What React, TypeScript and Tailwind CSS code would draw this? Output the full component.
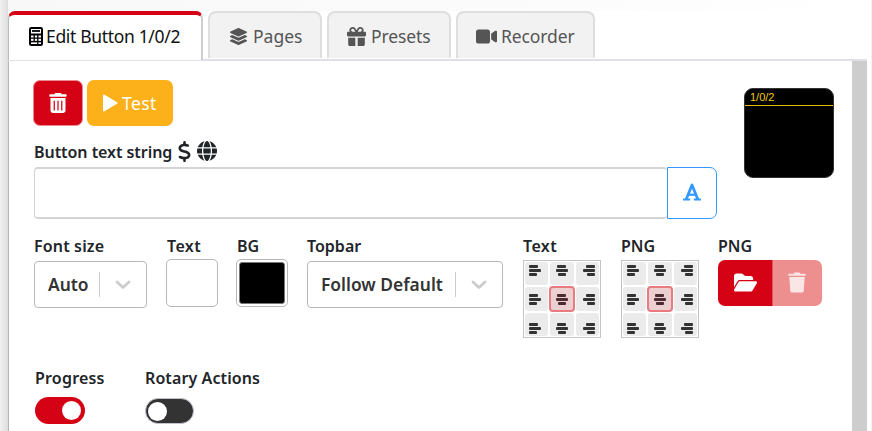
import type { ReactNode } from 'react'
import {
  FaDollarSign,
  FaFolderOpen,
  FaGift,
  FaGlobe,
  FaLayerGroup,
  FaTrashCan,
  FaVideo,
} from 'react-icons/fa6'

function CalculatorIcon() {
  return (
    <svg width="14" height="19" viewBox="0 0 14 19" fill="none" stroke="#000">
      <rect x="1" y="1" width="12" height="17" rx="1.2" strokeWidth="2" />
      <path d="M1 7.5H13" strokeWidth="2" />
      <path d="M3 4H11" strokeWidth="1.8" />
      <path d="M2 11.2H12M5.2 7V15M8.8 7V18" strokeWidth="1.3" />
      <path d="M2 14.6H12" strokeWidth="1.5" />
    </svg>
  )
}

function Tab({ className, children }: { className: string; children: ReactNode }) {
  return (
    <div
      className={`flex h-[47px] items-center gap-[5px] rounded-t-[8px] border-2 border-b-0 border-[#dededf] bg-[#f2f2f2] pt-[2px] text-[17.5px] text-[#555] ${className}`}
    >
      {children}
    </div>
  )
}

function Label({ children, className = '' }: { children: ReactNode; className?: string }) {
  return (
    <div className={`h-[24px] text-[16px] leading-[24px] font-semibold whitespace-nowrap text-[#212529] ${className}`}>
      {children}
    </div>
  )
}

function Select({ value, className }: { value: string; className: string }) {
  return (
    <div className={`flex h-[47px] items-center rounded-[4px] border border-[#b8b8b8] ${className}`}>
      <span className="flex-1 pl-[13px] text-[17.4px] font-semibold whitespace-nowrap text-[#333]">{value}</span>
      <span className="h-[25px] w-px bg-[#ccc]" />
      <span className="flex w-[46px] justify-center pr-px">
        <svg width="16" height="10" viewBox="0 0 16 10" fill="none" stroke="#ccc" strokeWidth="2.8" strokeLinecap="round" strokeLinejoin="round">
          <path d="M2 2L8 7.5L14 2" />
        </svg>
      </span>
    </div>
  )
}

const columns = ['items-start pl-[4px]', 'items-center', 'items-end pr-[4px]']
const rows = ['pt-[3px]', 'pt-[7px]', 'pt-[10px]']

function AlignGrid() {
  return (
    <div className="grid h-[78px] w-[78px] grid-cols-3 grid-rows-3 gap-[2px] border border-[#c4c4c4] bg-white p-[1px]">
      {rows.map((row, r) =>
        columns.map((column, c) => {
          const selected = r === 1 && c === 1
          return (
            <div
              key={`${r}-${c}`}
              className={`flex flex-col gap-[1px] rounded-[3px] ${row} ${column} ${
                selected ? 'bg-[#ecd0d1] outline-2 -outline-offset-1 outline-[#e77b80]' : 'bg-[#ebebeb]'
              }`}
            >
              {[9, 12, 8].map((w, i) => (
                <span
                  key={i}
                  style={{ width: w }}
                  className={`h-[3px] shrink-0 rounded-[1px] ${selected ? 'bg-[#4b2c30]' : 'bg-[#333]'}`}
                />
              ))}
            </div>
          )
        }),
      )}
    </div>
  )
}

export default function App() {
  return (
    <div className="flex h-[431px] w-[872px] overflow-hidden bg-white font-['Noto_Sans',sans-serif]">
      <div className="w-[8px] shrink-0 bg-linear-to-r from-[#f1f1f1] to-[#dedede]" />
      <div className="flex w-[859px] shrink-0 flex-col">
        <div className="h-[11px] shrink-0 bg-linear-to-r from-[#f8f8f8] via-[#fbfbfb] to-white" />
        <div className="flex h-[50px] shrink-0 items-start border-b-2 border-[#e0e0e6]">
          <div className="flex h-[49px] w-[195px] shrink-0 items-center gap-[4px] rounded-t-[7px] border-t-4 border-r-2 border-l border-t-[#d50215] border-r-[#cfcfcf] border-l-[#bbb] bg-white pb-[2px] pl-[20px] text-[17.5px] tracking-[-0.33px] whitespace-nowrap text-[#111]">
            <CalculatorIcon />
            <span className="-ml-px">Edit Button 1/0/2</span>
          </div>
          <Tab className="ml-[5px] w-[114px] pl-[19px]">
            <FaLayerGroup size={19} />
            <span>Pages</span>
          </Tab>
          <Tab className="ml-[5px] w-[124px] pl-[18px]">
            <FaGift size={19} />
            <span className="tracking-[-0.1px]">Presets</span>
          </Tab>
          <Tab className="ml-[5px] w-[139px] pl-[18px]">
            <FaVideo size={21} />
            <span className="-ml-px tracking-[-0.1px]">Recorder</span>
          </Tab>
        </div>
        <div className="flex min-h-0 flex-1 border-l border-[#b5b5b5]">
          <div className="flex w-[843px] shrink-0 flex-col pl-[25px]">
            <div className="flex h-[158px]">
              <div className="w-[683px] pt-[19px]">
                <div className="flex gap-[4px] text-white">
                  <button className="-ml-px flex h-[46px] w-[50px] items-center justify-center rounded-[7px] border border-[#ec8990] bg-[#d50215] pb-px">
                    <FaTrashCan size={20} />
                  </button>
                  <button className="flex h-[46px] w-[86px] items-center rounded-[7px] bg-[#fcb01a] pl-[15px] text-[17.5px] tracking-[0.4px]">
                    <svg width="16" height="18" viewBox="0 0 16 18" className="mr-[4px]">
                      <path d="M2 1.5L14.5 9L2 16.5Z" fill="white" stroke="white" strokeWidth="2" strokeLinejoin="round" />
                    </svg>
                    Test
                  </button>
                </div>
                <div className="mt-[14px] flex items-center">
                  <Label className="tracking-[-0.05px]">Button text string</Label>
                  <FaDollarSign size={21} className="-mt-[2px] ml-[2px] text-[#212529]" />
                  <FaGlobe size={20} className="-mt-[3px] ml-[2px] text-[#212529]" />
                </div>
                <div className="mt-[3px] flex h-[52px]">
                  <div className="w-[634px] rounded-[4px] border-2 border-r-0 border-l border-[#d4d4d4]" />
                  <div className="flex w-[50px] items-center justify-center rounded-r-[7px] border border-[#3399ff] pr-px pb-[2px]">
                    <svg width="18" height="18" viewBox="0 0 18 18" fill="none" stroke="#3399ff" strokeLinejoin="round">
                      <path d="M3.2 16.3L9 2L14.8 16.3" strokeWidth="2.8" />
                      <path d="M5.3 11.7H12.7" strokeWidth="2.2" />
                      <path d="M0.7 16.6H6.4M11.6 16.6H17.3" strokeWidth="2" strokeLinecap="round" />
                    </svg>
                  </div>
                </div>
              </div>
              <div className="mt-[27px] ml-[27px] h-[90px] w-[90px] rounded-[9px] border border-[#333] bg-black">
                <div className="h-[16px] pl-[5px] font-['Liberation_Sans',sans-serif] text-[11px] leading-[16px] text-[#f2c80c]">
                  1/0/2
                </div>
                <div className="h-px bg-[#e5bd0b]" />
              </div>
            </div>
            <div className="flex h-[121px] pt-[15px]">
              <div className="w-[132px]">
                <Label className="tracking-[0.15px]">Font size</Label>
                <Select value="Auto" className="mt-[3px] w-[113px]" />
              </div>
              <div className="w-[70px]">
                <Label className="pl-px tracking-[0.4px]">Text</Label>
                <div className="mt-[1px] h-[48px] w-[52px] rounded-[5px] border border-[#b8b8b8]" />
              </div>
              <div className="w-[71px]">
                <Label className="pl-px">BG</Label>
                <div className="mt-[1px] h-[48px] w-[52px] rounded-[5px] border border-[#b8b8b8] p-[2px]">
                  <div className="h-full rounded-[3px] border border-[#777] bg-black" />
                </div>
              </div>
              <div className="w-[216px]">
                <Label>Topbar</Label>
                <Select value="Follow Default" className="mt-[3px] w-[196px]" />
              </div>
              <div className="w-[98px]">
                <Label className="tracking-[0.4px]">Text</Label>
                <div className="mt-[2px]">
                  <AlignGrid />
                </div>
              </div>
              <div className="w-[97px]">
                <Label>PNG</Label>
                <div className="mt-[2px]">
                  <AlignGrid />
                </div>
              </div>
              <div>
                <Label>PNG</Label>
                <div className="mt-[2px] flex h-[46px] w-[104px] overflow-hidden rounded-[7px] text-white">
                  <div className="flex w-[55px] items-center justify-center border-r border-[#e2555f] bg-[#d50215] pb-px">
                    <FaFolderOpen size={23} />
                  </div>
                  <div className="flex flex-1 items-center justify-center bg-[#ee8f8f] pr-[2px] pb-[2px] text-[#fbe6e6]">
                    <svg width="18" height="21" viewBox="0 0 18 21" fill="currentColor">
                      <path d="M6.5 0.5H11.5L12.2 1.7H17Q17.7 1.7 17.7 2.5V3.8H0.3V2.5Q0.3 1.7 1 1.7H5.8ZM1.3 5H16.7L15.7 19Q15.6 20.6 14 20.6H4Q2.4 20.6 2.3 19Z" />
                    </svg>
                  </div>
                </div>
              </div>
            </div>
            <div className="flex pt-[26px] pl-px">
              <div className="w-[110px]">
                <Label className="tracking-[0.2px]">Progress</Label>
                <div className="mt-[7px] flex h-[27px] w-[50px] items-center justify-end rounded-full bg-[#d50215] pr-[4px]">
                  <div className="h-[19px] w-[19px] rounded-full bg-white" />
                </div>
              </div>
              <div>
                <Label className="tracking-[0.1px]">Rotary Actions</Label>
                <div className="mt-[8px] flex h-[26px] w-[49px] items-center rounded-full border border-[#c0c4ce] bg-[#333] pl-[2px]">
                  <div className="h-[19px] w-[19px] rounded-full bg-white" />
                </div>
              </div>
            </div>
          </div>
          <div className="w-[15px] bg-[#cdcdcd]" />
        </div>
      </div>
      <div className="ml-[4px] w-px bg-[#f2f2f2]" />
    </div>
  )
}
